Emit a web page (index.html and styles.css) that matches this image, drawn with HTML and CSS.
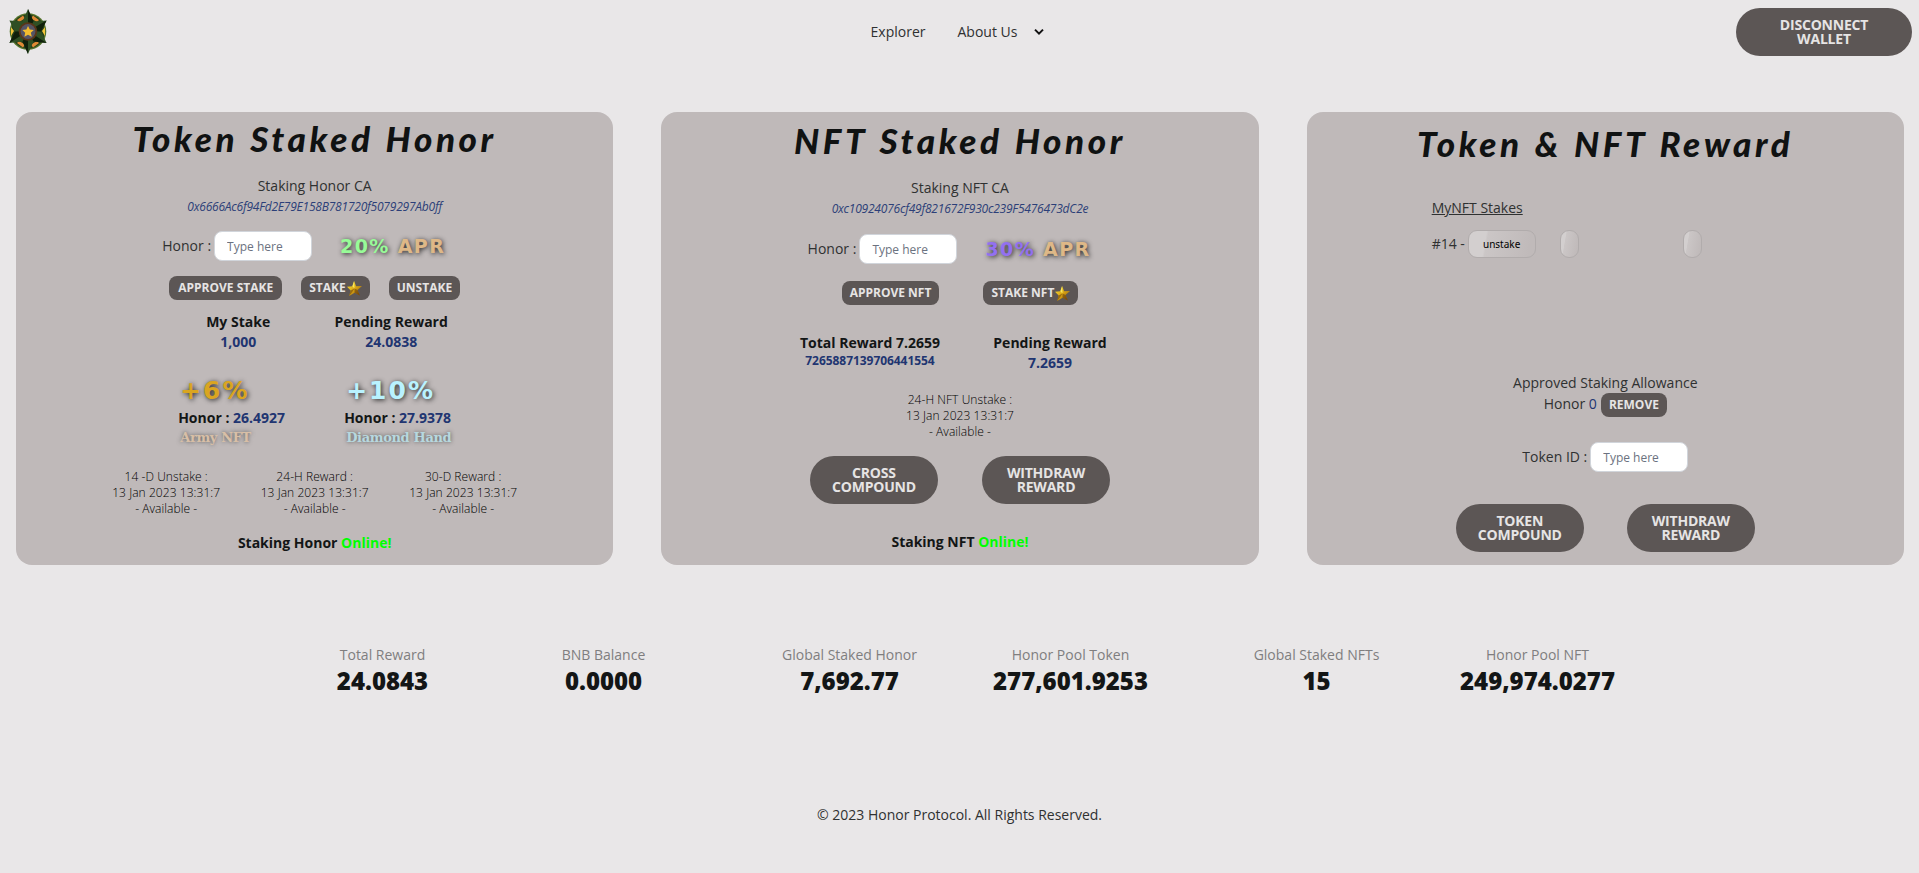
FILE: index.html
```html
<!DOCTYPE html>
<html lang="en">
<head>
<meta charset="utf-8">
<title>Honor Protocol</title>
<link rel="stylesheet" href="styles.css">
</head>
<body>
<svg class="defs" width="0" height="0">
  <defs>
    <linearGradient id="gold" x1="0" y1="0" x2="1" y2="1"><stop offset="0" stop-color="#ffe93a"/><stop offset=".5" stop-color="#d9a514"/><stop offset="1" stop-color="#7b450a"/></linearGradient>
    <symbol id="star" viewBox="0 0 14 14"><path fill="url(#gold)" d="M6.6 0 8.5 4.8 14 4.7 9.8 8.4 12 13.6 7.1 11 2 14 3.4 8.8 0 5.3 5 4.9Z"/><path fill="#5a3207" opacity=".5" d="M7 7 9.8 8.4 12 13.6 7.1 11ZM7 7 3.4 8.8 2 14 5 10Z"/><path fill="#fff36b" opacity=".8" d="M6.6 0 7 7 5 4.9Z"/></symbol>
  </defs>
</svg>
<header class="header">
  <svg class="logo" viewBox="0 0 38 45">
    <circle cx="19" cy="22.5" r="18.3" fill="#55752c"/>
    <circle cx="19" cy="22.5" r="17" fill="#26401c"/>
    <path fill="#e08a35" d="M8 11 14 6.5 16 9.5 10 13ZM30 11 24 6.5 22 9.5 28 13ZM8 34 14 38.5 16 35.5 10 32ZM30 34 24 38.5 22 35.5 28 32Z"/>
    <path fill="#f2c53a" d="M2 18 5 22 2 27ZM36 18 33 22 36 27Z"/>
    <path fill="#2f4f24" d="M19 0 24.5 12.5 37.6 11.5 32 22.5 37.6 34 24.5 32.5 19 45 13.5 32.5 .4 34 6 22.5 .4 11.5 13.5 12.5Z"/>
    <path fill="#10200b" d="M19 0 24.5 12.5 19 22ZM37.6 11.5 32 22.5 19 22ZM37.6 34 24.5 32.5 19 22ZM19 45 13.5 32.5 19 22ZM.4 34 6 22.5 19 22Z"/>
    <circle cx="19" cy="22.5" r="9.3" fill="#5a3518"/>
    <circle cx="19" cy="22.5" r="7.4" fill="#555465"/>
    <path fill="#f4bc2f" d="M19 17 20.8 20.5 24.8 21 21.8 23.8 22.8 27.8 19 25.8 15.4 27.8 16.2 23.8 13.4 21 17.4 20.5Z"/>
  </svg>
  <nav class="nav">
    <a>Explorer</a>
    <a>About Us</a>
    <svg class="chevron" viewBox="0 0 10 8"><path d="M1 1.6 5 5.6 9 1.6" fill="none" stroke="#111" stroke-width="2"/></svg>
  </nav>
  <button class="pill pill-wide">DISCONNECT<br>WALLET</button>
</header>

<main class="cards">
  <section class="card token">
    <h2 class="title">Token Staked Honor</h2>
    <p class="ca">Staking Honor CA</p>
    <p class="address">0x6666Ac6f94Fd2E79E158B781720f5079297Ab0ff</p>
    <div class="stake-row">
      <label>Honor :</label><input class="field" placeholder="Type here">
      <span class="apr"><span class="green">20%</span> APR</span>
    </div>
    <div class="actions">
      <button class="btn">APPROVE STAKE</button>
      <button class="btn">STAKE<svg class="star"><use href="#star"/></svg></button>
      <button class="btn">UNSTAKE</button>
    </div>
    <div class="totals">
      <div><b>My Stake</b><b class="blue">1,000</b></div>
      <div><b>Pending Reward</b><b class="blue">24.0838</b></div>
    </div>
    <div class="bonuses">
      <div class="bonus"><span class="percent gold">+6%</span><b>Honor : <span class="blue">26.4927</span></b><span class="perk army">Army NFT</span></div>
      <div class="bonus"><span class="percent ice">+10%</span><b>Honor : <span class="blue">27.9378</span></b><span class="perk diamond">Diamond Hand</span></div>
    </div>
    <div class="dates">
      <p>14 -D Unstake :<br>13 Jan 2023 13:31:7<br>- Available -</p>
      <p>24-H Reward :<br>13 Jan 2023 13:31:7<br>- Available -</p>
      <p>30-D Reward :<br>13 Jan 2023 13:31:7<br>- Available -</p>
    </div>
    <p class="status">Staking Honor <span>Online!</span></p>
  </section>

  <section class="card nft">
    <h2 class="title">NFT Staked Honor</h2>
    <p class="ca">Staking NFT CA</p>
    <p class="address">0xc10924076cf49f821672F930c239F5476473dC2e</p>
    <div class="stake-row">
      <label>Honor :</label><input class="field" placeholder="Type here">
      <span class="apr"><span class="purple">30%</span> APR</span>
    </div>
    <div class="actions">
      <button class="btn">APPROVE NFT</button>
      <button class="btn">STAKE NFT<svg class="star"><use href="#star"/></svg></button>
    </div>
    <div class="totals">
      <div><b>Total Reward 7.2659</b><b class="blue small">7265887139706441554</b></div>
      <div><b>Pending Reward</b><b class="blue">7.2659</b></div>
    </div>
    <div class="dates">
      <p>24-H NFT Unstake :<br>13 Jan 2023 13:31:7<br>- Available -</p>
    </div>
    <div class="pills">
      <button class="pill">CROSS<br>COMPOUND</button>
      <button class="pill">WITHDRAW<br>REWARD</button>
    </div>
    <p class="status">Staking NFT <span>Online!</span></p>
  </section>

  <section class="card reward">
    <h2 class="title">Token &amp; NFT Reward</h2>
    <div class="stakes">
      <p class="stakes-title">MyNFT Stakes</p>
      <div class="stake-items">
        <span class="stake-id">#14 -</span><button class="glass named">unstake</button>
        <button class="glass"></button>
        <button class="glass"></button>
      </div>
    </div>
    <p class="allowance">Approved Staking Allowance</p>
    <div class="allow-row"><span>Honor <span class="blue">0</span></span><button class="btn remove">REMOVE</button></div>
    <div class="token-row"><label>Token ID :</label><input class="field" placeholder="Type here"></div>
    <div class="pills">
      <button class="pill">TOKEN<br>COMPOUND</button>
      <button class="pill">WITHDRAW<br>REWARD</button>
    </div>
  </section>
</main>

<section class="stats">
  <div class="stat"><span>Total Reward</span><b>24.0843</b></div>
  <div class="stat"><span>BNB Balance</span><b>0.0000</b></div>
  <div class="stat"><span>Global Staked Honor</span><b>7,692.77</b></div>
  <div class="stat"><span>Honor Pool Token</span><b>277,601.9253</b></div>
  <div class="stat"><span>Global Staked NFTs</span><b>15</b></div>
  <div class="stat"><span>Honor Pool NFT</span><b>249,974.0277</b></div>
</section>
<footer class="footer">© 2023 Honor Protocol. All Rights Reserved.</footer>
</body>
</html>
```
FILE: styles.css
```css
* { box-sizing: border-box; }
body {
  margin: 0;
  height: 873px;
  background: #e9e7e8;
  color: #2f3131;
  font: 400 14px/20px "Open Sans", "Noto Sans", sans-serif;
  overflow: hidden;
}
p, h2 { margin: 0; }
b { font-weight: 700; color: #131616; }
button { border: 0; font-family: inherit; white-space: nowrap; }
.defs { display: block; }
.blue { color: #213571; }

.header {
  display: grid;
  grid-template-columns: 1fr auto 1fr;
  align-items: center;
  height: 64px;
  padding: 0 7px 0 9px;
}
.logo { width: 38px; height: 45px; margin-top: -1px; }
.nav { display: flex; align-items: center; gap: 32px; margin-right: 6px; }
.chevron { width: 10px; height: 8px; margin-left: -15px; }
.pill {
  width: 128px;
  height: 48px;
  padding: 0;
  border-radius: 24px;
  background: #5c5655;
  color: #e6e4e4;
  font-size: 14px;
  line-height: 14px;
  font-weight: 700;
  letter-spacing: -.2px;
}
.pill-wide { width: 176px; justify-self: end; }

.cards {
  display: grid;
  grid-template-columns: repeat(3, 1fr);
  gap: 48px;
  padding: 48px 15px 0 16px;
}
.card {
  display: flex;
  flex-direction: column;
  align-items: center;
  height: 453px;
  border-radius: 16px;
  background: #bfb9b9;
}
.title {
  height: 53px;
  color: #101212;
  font: italic 900 35px/53px Lato, sans-serif;
  letter-spacing: 3.6px;
  word-spacing: 1px;
  white-space: pre;
}
.ca { margin-top: 11px; }
.address { margin-top: 1px; font-size: 12px; font-weight: 400; letter-spacing: -.22px; font-style: italic; color: #2c3f78; }
.stake-row { display: flex; align-items: center; margin-top: 14px; }
.stake-row label, .token-row label { margin-right: 3px; }
.field {
  width: 98px;
  height: 30px;
  padding: 0 12px;
  border: 1px solid #d1d5db;
  border-radius: 8px;
  background: #fff;
  font: 400 12px "Open Sans", sans-serif;
}
.field::placeholder { color: #6b7280; opacity: 1; }
.apr {
  width: 127px;
  margin-left: 28px;
  color: #deb887;
  font: 700 19px/30px "DejaVu Sans", sans-serif;
  letter-spacing: 1.4px;
  white-space: nowrap;
  text-shadow: 1px 1px 5px #222;
}
.green { color: #98fb98; }
.purple { color: #9370f0; }
.actions { display: flex; justify-content: center; gap: 19px; margin-top: 15px; }
.btn {
  display: flex;
  align-items: center;
  height: 24px;
  padding: 0 8px;
  border-radius: 8px;
  background: #5c5655;
  color: #e6e4e4;
  font-size: 12px;
  line-height: 12px;
  font-weight: 700;
}
.star { width: 15px; height: 15px; margin-left: 1px; }
.token .btn:first-child { padding: 0 9px; }
.totals { display: flex; justify-content: center; margin-top: 12px; }
.totals > div { display: flex; flex-direction: column; align-items: center; width: 153px; }
.small { font-size: 12px; line-height: 16px; letter-spacing: -.05px; }

.bonuses { display: flex; gap: 59px; margin-top: 27px; }
.bonus { display: flex; flex-direction: column; width: 107px; white-space: nowrap; }
.percent {
  margin: 0 0 5px 2px;
  font: 700 25px/24px "DejaVu Sans", sans-serif;
  letter-spacing: 2px;
  text-shadow: 1px 1px 5px #222;
}
b.blue { color: #213571; }
.gold { color: #daa520; }
.ice { color: #b9f2ff; }
.perk { margin-left: 2px; font: 700 13px/20px "DejaVu Serif", serif; letter-spacing: -.35px; text-shadow: 0 0 4px #555; }
.army { color: #d8bfa6; }
.diamond { color: #b7d8df; }

.dates { display: flex; margin-top: 21px; text-align: center; font-size: 12px; line-height: 16px; font-weight: 300; letter-spacing: .06px; color: #000; }
.dates p { width: 148.5px; }
.status { margin-top: 16px; font-weight: 700; color: #131616; }
.status span { color: #0f0; }
.pills { display: flex; gap: 44px; }

.nft .title { height: 54px; line-height: 56px; }
.nft .ca { margin-top: 12px; }
.nft .stake-row { margin-top: 15px; }
.nft .actions { gap: 44px; margin-top: 17px; }
.nft .totals { margin-top: 28px; }
.nft .totals > div { width: 180px; }
.nft .dates { margin-top: 19px; }
.nft .pills { margin-top: 16px; }
.nft .status { margin-top: 28px; }

.reward .title { height: 63px; line-height: 63px; }
.stakes { align-self: stretch; padding-left: 125px; margin-top: 23px; }
.stakes-title { text-decoration: underline; }
.stake-items { display: flex; align-items: center; margin-top: 12px; height: 28px; }
.stake-id { width: 33px; white-space: nowrap; }
.glass {
  width: 19px;
  height: 28px;
  padding: 0;
  margin-left: 104px;
  border: 1.5px solid #b1acac;
  border-radius: 9px;
  background: linear-gradient(100deg, #d3cfcf 0 25%, #cbc6c6 28%, #c0baba 90%);
}
.glass.named { width: 68px; margin-left: 3px; font: 400 10px "Noto Sans", sans-serif; color: #000; }
.named + .glass { margin-left: 24px; }
.allowance { margin-top: 115px; }
.allow-row { display: flex; align-items: center; gap: 4px; height: 24px; }
.allow-row > span { margin-top: -2px; }
.remove { padding: 0 8px; }
.token-row { display: flex; align-items: center; margin-top: 25px; }
.reward .pills { gap: 43px; margin-top: 32px; }

.stats {
  display: grid;
  grid-template-columns: 221px 221px 25px 221px 221px 25px 221px 221px;
  justify-content: center;
  margin-top: 80px;
  padding-left: 1px;
}
.stat { display: flex; flex-direction: column; align-items: center; }
.stat span { color: #7f7e7f; }
.stat b { font-size: 24px; line-height: 32px; font-weight: 800; }
.stat:nth-child(3) { grid-column: 4; }
.stat:nth-child(5) { grid-column: 7; }
.footer { margin-top: 108px; text-align: center; }
```
